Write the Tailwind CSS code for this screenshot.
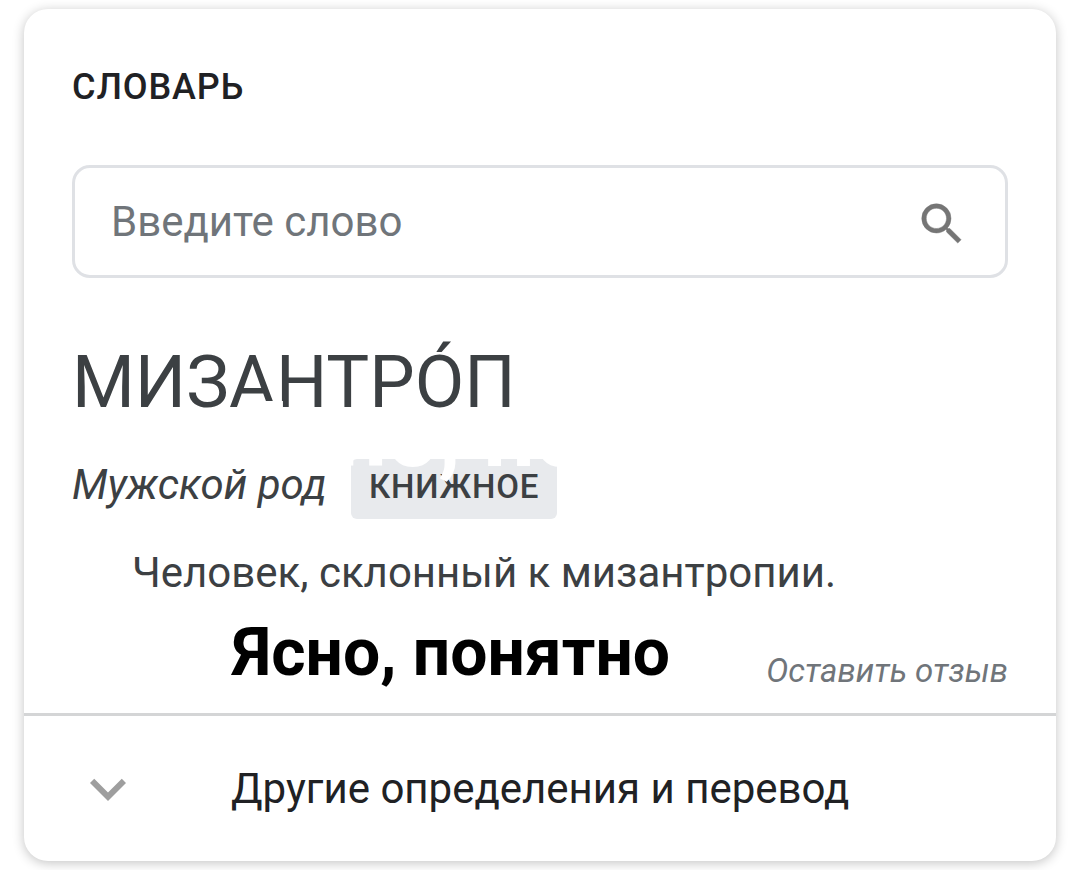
<!DOCTYPE html>
<html lang="ru">
<head>
    <meta charset="UTF-8">
    <meta name="viewport" content="width=device-width, initial-scale=1.0">
    <title>Словарь</title>
    <script src="https://cdn.jsdelivr.net/npm/@tailwindcss/browser@4"></script>
</head>
<body class="bg-white font-[Roboto,sans-serif] text-[#3c4043]">
    <main class="mx-6 mt-[9px] mb-[9px] rounded-3xl bg-white shadow-[0_2px_12px_rgba(0,0,0,0.24)]">
        <div class="px-12 pt-[54px] pb-6">
            <h2 class="text-[36px] leading-12 font-medium tracking-wide text-[#202124]">СЛОВАРЬ</h2>

            <!-- Search box -->
            <form class="mt-[54px] flex h-[113px] items-center rounded-[18px] border-3 border-[#dfe1e5] pr-9 pl-9">
                <label for="word" class="sr-only">Слово</label>
                <input id="word" type="text" placeholder="Введите слово" class="h-16 min-w-0 grow text-[42px] leading-12 outline-none placeholder:text-[#70757a]">
                <button type="button" aria-label="Найти" class="pt-1">
                    <svg class="size-[54px]" viewBox="0 0 24 24" fill="#757575" stroke="#757575" stroke-width="0.2">
                        <path d="M15.5 14h-.79l-.28-.27A6.471 6.471 0 0 0 16 9.5 6.5 6.5 0 1 0 9.5 16c1.61 0 3.09-.59 4.23-1.57l.27.28v.79l5 4.99L20.49 19l-4.99-5zm-6 0C7.01 14 5 11.99 5 9.5S7.01 5 9.5 5 14 7.01 14 9.5 11.99 14 9.5 14z"/>
                    </svg>
                </button>
            </form>

            <!-- Entry -->
            <div class="relative mt-[65px]">
                <h1 class="text-[72px] leading-20">МИЗАНТРО́П</h1>
                <div class="mt-9 flex items-start gap-6">
                    <span class="text-[42px] leading-[52px] italic">Мужской род</span>
                    <span class="rounded-md bg-[#e8eaed] px-[18px] pb-1 text-[33px] leading-14 font-medium tracking-wide">КНИЖНОЕ</span>
                </div>
                <!-- White caption laid over the word and the badge -->
                <span aria-hidden="true" class="absolute top-[42px] left-[162px] text-[91px] leading-[100px] font-bold whitespace-nowrap text-white">Ясно, понятно</span>
            </div>
            <p class="mt-[30px] pl-[60px] text-[42px] leading-12">Человек, склонный к мизантропии.</p>

            <div class="mt-5 flex items-end justify-between">
                <strong class="pl-40 text-[66px] leading-18 font-bold text-black">Ясно, понятно</strong>
                <a href="#" class="text-[33px] leading-9 text-[#70757a] italic">Оставить отзыв</a>
            </div>
        </div>

        <button type="button" class="flex h-[148px] w-full items-center border-t-3 border-[#d4d5d6] pl-12 text-left text-[42px] leading-12 text-[#202124]">
            <svg class="size-[72px]" viewBox="0 0 24 24" fill="#9e9e9e">
                <path d="M16.59 8.59L12 13.17 7.41 8.59 6 10l6 6 6-6z"/>
            </svg>
            <span class="pl-[87px]">Другие определения и перевод</span>
        </button>
    </main>
</body>
</html>
